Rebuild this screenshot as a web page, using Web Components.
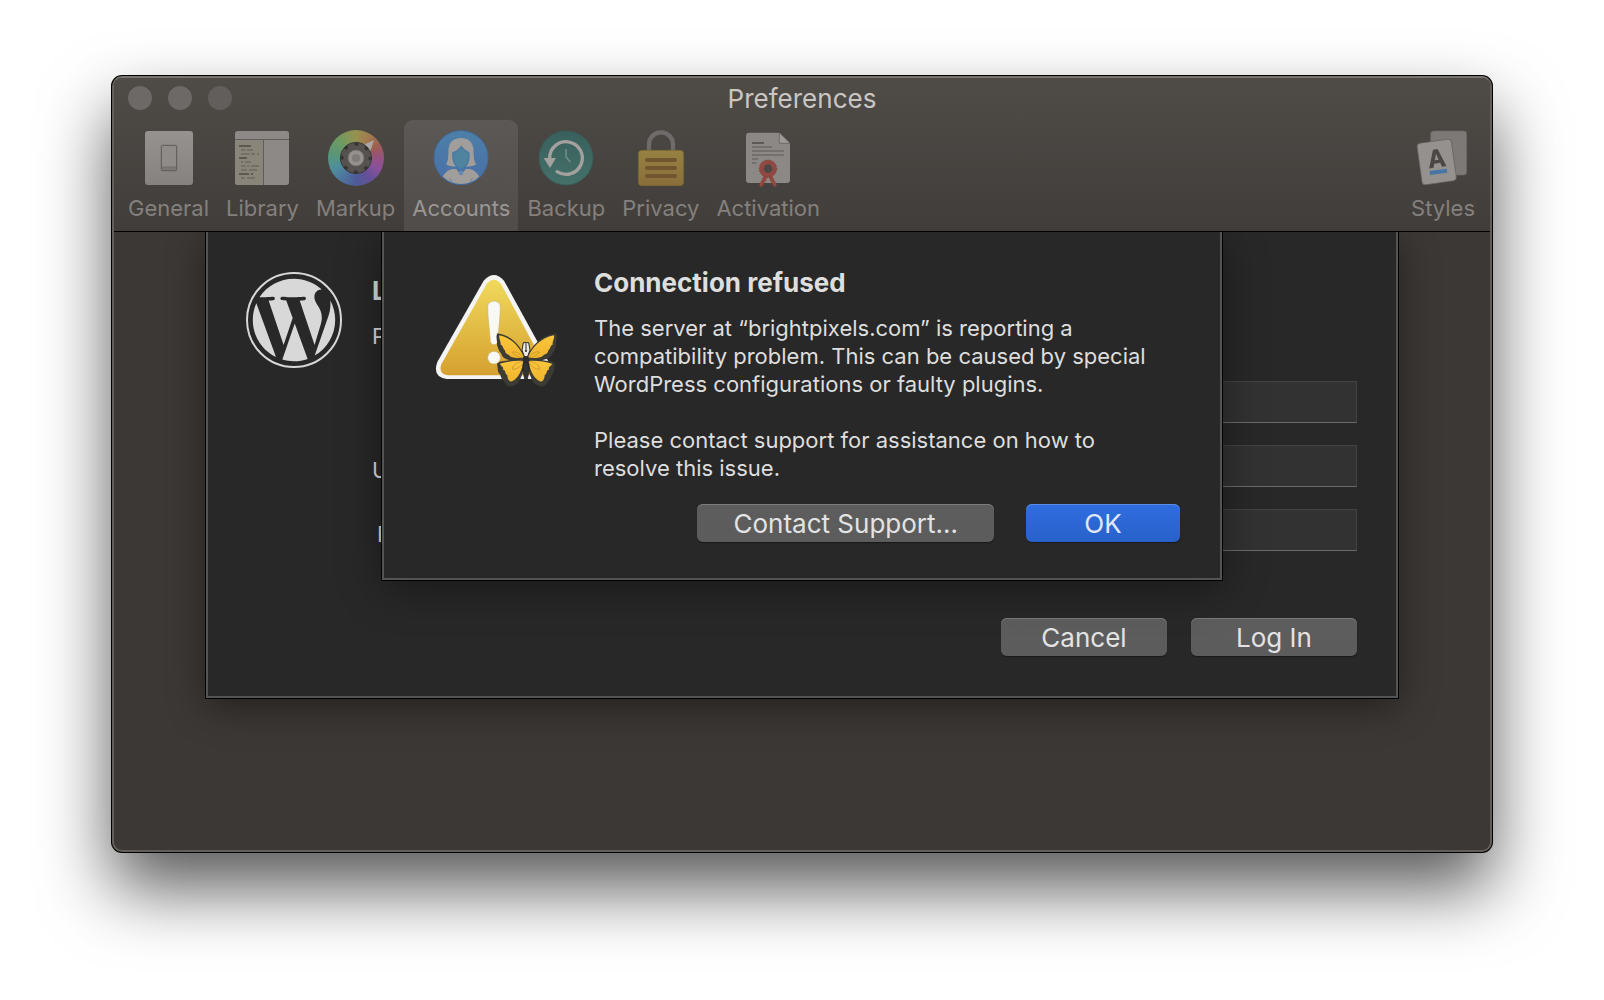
<!DOCTYPE html>
<html lang="en">
<head>
<meta charset="utf-8">
<title>Preferences</title>
<style>
  body { margin: 0; background: #fff; font-family: Inter, "Liberation Sans", sans-serif; font-size: 22px; line-height: 28px; }
</style>
</head>
<body>
<pref-window></pref-window>

<template id="t-window">
  <style>
    :host { display: block; margin: 76px 112px 146px; border: 2px solid #625f5b; border-top-color: #77746f; border-radius: 10px;
      background: #3c3835; box-shadow: 0 0 0 1px #000, 0 36px 70px rgba(0,0,0,.66); }
    main { display: grid; overflow: hidden; padding-bottom: 152px; }
    login-sheet, alert-sheet { grid-area: 1 / 1; align-self: start; }
    login-sheet { margin: 0 92px; }
    alert-sheet { margin: 0 268px; }
  </style>
  <pref-toolbar></pref-toolbar>
  <main>
    <login-sheet></login-sheet>
    <alert-sheet></alert-sheet>
  </main>
</template>

<template id="t-toolbar">
  <style>
    :host { display: block; padding: 4px 7px 0 6px; background: linear-gradient(#4f4b47, #413d3a); border-bottom: 1px solid #000; border-radius: 8px 8px 0 0; }
    header { display: grid; grid-template-columns: 1fr auto 1fr; align-items: start; padding: 0 7px 0 8px; }
    h1 { margin: 0; font-size: 26px; line-height: 34px; font-weight: 400; color: #cac6c3; }
    .lights { display: flex; gap: 16px; padding-top: 4px; }
    .lights button { width: 24px; height: 24px; padding: 0; border: 0; border-radius: 50%; background: #6d6966; }
    .lights button:last-child { background: #625e5b; }
    nav { display: flex; gap: 1px; margin-top: 4px; }
    .space { flex: 1; }
  </style>
  <header>
    <div class="lights"><button aria-label="Close"></button><button aria-label="Minimize"></button><button aria-label="Zoom"></button></div>
    <h1>Preferences</h1>
  </header>
  <nav>
    <toolbar-item label="General">
      <svg viewBox="117 204 180 180" width="60" height="60">
        <defs><linearGradient id="g" x2="0" y2="1"><stop stop-color="#959290"/><stop offset="1" stop-color="#86827f"/></linearGradient></defs>
        <rect x="135" y="213" width="144" height="162" rx="9" fill="url(#g)"/>
        <rect x="184" y="256" width="46" height="76" rx="3" fill="#8e8b89" stroke="#5c5957" stroke-width="3"/>
        <path d="M186 321h42v9h-42z" fill="#7b7876"/><path d="M186 321h42" stroke="#666361" stroke-width="2"/>
      </svg>
    </toolbar-item>
    <toolbar-item label="Library">
      <svg viewBox="399 204 180 180" width="60" height="60">
        <rect x="408" y="213" width="162" height="162" rx="8" fill="#8c8986"/>
        <path d="M408 239h85v136h-77a8 8 0 0 1-8-8z" fill="#89857a"/>
        <path d="M408 238.500h162M493.500 239v136" stroke="#5f5c59" stroke-width="3"/>
        <g stroke="#5d594f" stroke-width="6"><path d="M420 258h36M420 294h24M420 342h30M456 342h6"/></g>
        <g stroke="#737066" stroke-width="6"><path d="M426 270h13M444 270h18M426 282h25M456 282h12M474 282h6M426 306h7M438 306h18M426 318h13M444 318h7M456 318h24M426 330h18M450 330h24M426 354h12M444 354h24"/></g>
      </svg>
    </toolbar-item>
    <toolbar-item label="Markup">
      <svg viewBox="678 204 180 180" width="60" height="60">
        <foreignObject x="684" y="210" width="168" height="168"><div style="width:168px;height:168px;border-radius:50%;background:conic-gradient(#96914f,#a17c4f 30deg,#9c5f50 60deg,#955280 90deg,#8a519b 115deg,#665099 145deg,#4e5a98 180deg,#4e7a9e 220deg,#4f8f9c 245deg,#57967a 275deg,#6c9a63 315deg,#96914f)"></div></foreignObject>
        <path d="M822 240l-32 15 21 18z" fill="#aaa7a4"/>
        <circle cx="768" cy="294" r="47" fill="#555250" stroke="#3d3a38" stroke-width="3"/>
        <circle cx="768" cy="294" r="42" fill="none" stroke="#353331" stroke-width="9" stroke-dasharray="11 22" stroke-dashoffset="5.500"/>
        <circle cx="768" cy="294" r="24" fill="#94918f" stroke="#6c6967" stroke-width="2"/>
        <circle cx="768" cy="294" r="12" fill="#7e7b79"/>
      </svg>
    </toolbar-item>
    <toolbar-item label="Accounts" selected>
      <svg viewBox="93 54 180 180" width="60" height="60">
        <defs><linearGradient id="a" x2="0" y2="1"><stop stop-color="#4c80a8"/><stop offset="1" stop-color="#4a6ea8"/></linearGradient>
        <clipPath id="ac"><circle cx="183" cy="143" r="79"/></clipPath></defs>
        <circle cx="183" cy="143" r="81" fill="url(#a)" stroke="#3f6c9e" stroke-width="3"/>
        <g clip-path="url(#ac)" fill="#a09d9b">
          <path d="M138 163c9-12 6-32 8-48 3-21 17-31 37-31s34 10 37 31c2 16-1 36 9 48-10 7-27 8-36 5h-20c-9 3-26 2-35-5z"/>
          <path d="M119 230c6-32 17-47 37-53h13l14 16 14-16h13c20 6 31 21 37 53z"/>
          <path d="M159 128c10-2 18-9 25-18 7 9 12 14 22 18 3 20-2 34-11 42l-12 8-12-8c-10-8-14-22-12-42z" fill="#4e84a0" stroke="#4678a6" stroke-width="4"/>
          <path d="M169 178l14 15 14-15-14 5z" fill="#4d72a5"/><circle cx="183" cy="189" r="7" fill="#6589b5"/>
          <path d="M148 204c5 5 7 11 7 20M218 204c-5 5-7 11-7 20" fill="none" stroke="#67809c" stroke-width="3"/>
        </g>
      </svg>
    </toolbar-item>
    <toolbar-item label="Backup">
      <svg viewBox="405 54 180 180" width="60" height="60">
        <defs><linearGradient id="b" x2="0" y2="1"><stop stop-color="#39605c"/><stop offset="1" stop-color="#45706a"/></linearGradient></defs>
        <circle cx="495" cy="144" r="81" fill="url(#b)" stroke="#375d59" stroke-width="3"/>
        <path d="M446 144a49 49 0 1 1 22 41" fill="none" stroke="#a3a09e" stroke-width="10" stroke-linecap="round"/>
        <path d="M428 144h37l-18 30z" fill="#a3a09e"/>
        <path d="M495 119v22l12 14" fill="none" stroke="#718a86" stroke-width="5" stroke-linecap="round"/>
      </svg>
    </toolbar-item>
    <toolbar-item label="Privacy">
      <svg viewBox="87 144 180 180" width="60" height="60">
        <defs><linearGradient id="p" x2="0" y2="1"><stop stop-color="#968242"/><stop offset="1" stop-color="#8a6d3a"/></linearGradient></defs>
        <path d="M141 212v-19a36 36 0 0 1 72 0v19" fill="none" stroke="#6e6b6a" stroke-width="13"/>
        <rect x="109" y="211" width="136" height="106" rx="11" fill="url(#p)" stroke="#77652f" stroke-width="2"/>
        <path d="M135 240h84M135 264h84M135 288h84" stroke="#70552e" stroke-width="12" stroke-linecap="round"/>
      </svg>
    </toolbar-item>
    <toolbar-item label="Activation">
      <svg viewBox="411 144 180 180" width="60" height="60">
        <path d="M444 158h91l32 32v110a9 9 0 0 1-9 9H444a9 9 0 0 1-9-9V167a9 9 0 0 1 9-9z" fill="#8b8886"/>
        <path d="M535 158v32h32z" fill="#9d9a98" stroke="#5c5957" stroke-width="2"/>
        <path d="M453 189h36" stroke="#5c5957" stroke-width="6"/>
        <path d="M453 201h60M453 213h96M453 225h96M453 237h18M453 249h13" stroke="#73706e" stroke-width="6"/>
        <path d="M490 284l-15 30 4 8 6-5 16-25 16 25 6 5 4-8-15-30z" fill="#924840"/>
        <path d="M496 297l5-7 5 7v12h-10z" fill="#8b8886"/>
        <circle cx="501" cy="266" r="20" fill="none" stroke="#924840" stroke-width="12"/>
        <circle cx="501" cy="266" r="26" fill="none" stroke="#7c3b35" stroke-width="3" stroke-dasharray="4 4"/>
        <circle cx="501" cy="266" r="13" fill="#4b4745" stroke="#733832" stroke-width="2"/>
      </svg>
    </toolbar-item>
    <span class="space"></span>
    <toolbar-item label="Styles">
      <svg viewBox="100 204 180 180" width="60" height="60">
        <rect x="153" y="213" width="108" height="132" rx="9" fill="#7c7976" stroke="#696663" stroke-width="2"/>
        <g transform="rotate(-8 171 305)">
          <rect x="119" y="243" width="104" height="126" rx="10" fill="#94918f" stroke="#5f5c5a" stroke-width="2"/>
          <path d="M146 322l19-54h14l19 54h-13l-4-12h-18l-4 12zM166 300h12l-6-19z" fill="#4a4745"/>
          <path d="M146 330h52v12h-52z" fill="#4676a6"/>
        </g>
      </svg>
    </toolbar-item>
  </nav>
</template>

<template id="t-item">
  <style>
    :host { display: block; }
    button { display: flex; flex-direction: column; align-items: center; gap: 6px; padding: 8px 8px 9px; border: 0; border-radius: 9px 9px 0 0; background: none; color: #84807d; font: inherit; }
    :host([selected]) button { background: linear-gradient(#5b5855, #4f4c49); color: #9a9693; }
    ::slotted(svg) { display: block; }
  </style>
  <button><slot></slot><span></span></button>
</template>

<template id="t-button">
  <style>
    :host { display: block; }
    button { display: block; width: 100%; min-width: 166px; height: 38px; padding: 2px 36px 0; border: 0; border-radius: 6px; background: linear-gradient(#5d5d5d, #5c5c5c); color: #e3e3e3;
      box-shadow: inset 0 1px #7b7b7b, 0 1px 1px rgba(0,0,0,.4); font: inherit; font-size: 26px; line-height: 36px; }
    :host([primary]) button { min-width: 154px; background: linear-gradient(#2f6de0, #2861c9); box-shadow: inset 0 1px #5a8be6, 0 1px 1px rgba(0,0,0,.4); color: #e0e8f8; }
  </style>
  <button><slot></slot></button>
</template>

<template id="t-login">
  <style>
    :host { display: block; border: solid #545454; border-width: 0 2px 2px; box-shadow: 0 0 0 1px #000, 0 8px 36px rgba(0,0,0,.45); background: #282828; color: #dcdcdc; }
    form { display: grid; grid-template-columns: auto 1fr; column-gap: 30px; padding: 40px 39px 40px 38px; }
    h2 { margin: 2px 0 14px; font-size: 26px; line-height: 34px; }
    p { margin: 0 0 31px; }
    .fields { display: grid; grid-template-columns: auto 1fr; gap: 22px 8px; align-items: center; }
    label { padding-top: 8px; text-align: right; }
    input { box-sizing: border-box; width: 100%; height: 42px; padding: 0 8px; border: 1px solid #424242; border-bottom-color: #6c6c6c; background: #323232; color: inherit; font: inherit; }
    footer { grid-column: 1 / -1; display: flex; justify-content: end; gap: 24px; margin-top: 67px; }
  </style>
  <form>
    <svg viewBox="0 0 96 96" width="96" height="96" fill="#d8d8d8">
      <circle cx="48" cy="48" r="47" fill="none" stroke="#d8d8d8" stroke-width="2"/>
      <path transform="translate(48 48) scale(3.820) translate(-12 -12)" d="M21.469 6.825c.84 1.537 1.318 3.3 1.318 5.175 0 3.979-2.156 7.456-5.363 9.325l3.295-9.527c.615-1.54.82-2.771.82-3.864 0-.405-.026-.78-.07-1.11m-7.981.105c.647-.03 1.232-.105 1.232-.105.582-.075.514-.93-.067-.899 0 0-1.755.135-2.88.135-1.064 0-2.85-.15-2.85-.15-.585-.03-.661.855-.075.885 0 0 .54.061 1.125.09l1.68 4.605-2.37 7.08L5.354 6.9c.649-.03 1.234-.1 1.234-.1.585-.075.516-.93-.065-.896 0 0-1.746.138-2.874.138-.2 0-.438-.008-.69-.015C4.911 3.15 8.235 1.215 12 1.215c2.809 0 5.365 1.072 7.286 2.833-.046-.003-.091-.009-.141-.009-1.06 0-1.812.923-1.812 1.914 0 .89.513 1.643 1.06 2.531.411.72.89 1.643.89 2.977 0 .915-.354 1.994-.821 3.479l-1.075 3.585-3.9-11.61zM12 22.784c-1.059 0-2.081-.153-3.048-.437l3.237-9.406 3.315 9.087c.024.053.05.101.078.149-1.12.393-2.325.609-3.582.609M1.211 12c0-1.564.336-3.05.935-4.39L7.29 21.709C3.694 19.96 1.212 16.271 1.211 12"/>
    </svg>
    <div>
      <h2>Log In</h2>
      <p>Please log in</p>
      <div class="fields">
        <label for="url">URL:</label><input id="url" type="text">
        <label for="user">Username:</label><input id="user" type="text">
        <label for="pass">Password:</label><input id="pass" type="password">
      </div>
    </div>
    <footer><mac-button>Cancel</mac-button><mac-button>Log In</mac-button></footer>
  </form>
</template>

<template id="t-alert">
  <style>
    :host { display: grid; grid-template-columns: auto 1fr; column-gap: 14px; padding: 28px 40px 36px 36px; border: solid #545454; border-width: 0 2px 2px; box-shadow: 0 0 0 1px #000, 0 8px 40px rgba(0,0,0,.4); background: #282828; color: #dedede; }
    svg { display: block; }
    h2 { margin: 6px 0 14px; font-size: 26px; line-height: 34px; }
    p { margin: 0 0 28px; max-width: 570px; }
    p:last-child { margin: 0; }
    footer { grid-column: 1 / -1; display: flex; justify-content: end; gap: 32px; margin-top: 22px; }
  </style>
  <svg viewBox="0 0 480 420" width="160" height="140">
    <defs>
      <linearGradient id="y" x2="0" y2="1"><stop stop-color="#f0d95c"/><stop offset="1" stop-color="#d5a02f"/></linearGradient>
      <linearGradient id="w" x2="0" y2="1"><stop stop-color="#fbc63c"/><stop offset="1" stop-color="#f0b52c"/></linearGradient>
    </defs>
    <path d="M191 62q31-34 61 0L386 306q20 50-28 51H80q-44-6-28-51z" fill="#f4f4f2"/>
    <path d="M200 72q22-26 43 0L374 314q8 29-18 32H84q-30-3-20-33z" fill="url(#y)"/>
    <path d="M203 138c2-20 36-20 38 0 0 38-6 72-8 106-2 14-20 14-22 0-2-34-8-68-8-106z" fill="#f8f8f5" stroke="#cfb463" stroke-width="2"/>
    <circle cx="222" cy="293" r="19" fill="#f8f8f5" stroke="#cfb463" stroke-width="2"/>
    <g fill="#3d3b36">
      <path id="wing" d="M316 296c-10-32-38-70-84-76-6 10 1 24-1 36 4 8 5 18 12 24 4 14 14 18 26 20-14 4-32 2-38 12 4 12-1 22 10 32 2 14 12 18 18 30 10 10 24 4 34-4 12-16 20-44 23-74z"/>
      <path d="M320 296c10-32 40-70 88-76 6 10-1 24 1 36-4 8-5 18-12 24-4 14-18 18-30 20 14 4 32 2 38 12-4 12 1 22-10 32-2 14-12 18-18 30-10 10-24 4-34-4-12-16-20-44-23-74z"/>
    </g>
    <g fill="url(#w)">
      <path d="M312 292c-12-28-34-58-74-66-2 12 5 16 4 28 8 2 6 12 13 17 0 12 12 12 17 19 12 4 28 5 40 2z"/>
      <path d="M324 292c12-28 36-58 78-66 2 12-5 16-4 28-8 2-6 12-13 17 0 12-14 12-19 19-12 4-30 5-42 2z"/>
      <path d="M310 303c-22-2-50 2-70 8 2 8 12 8 9 18 10 0 4 13 13 16 0 12 6 22 14 19 20-8 32-38 34-61z"/>
      <path d="M326 303c22-2 50 2 70 8-2 8-12 8-9 18-10 0-4 13-13 16 0 12-6 22-14 19-20-8-32-38-34-61z"/>
    </g>
    <g fill="none" stroke="#b98c2e" stroke-width="2">
      <path d="M310 294c-20-2-34-16-32-18 14-2 26 8 32 18zM310 304c-20 2-34 12-32 24 16 0 28-12 32-24zM326 294c20-2 34-16 32-18-14-2-26 8-32 18zM326 304c20 2 34 12 32 24-16 0-28-12-32-24z"/>
    </g>
    <path d="M310 248h16l4 22-8 22h-8l-8-22z" fill="#eeeae2" stroke="#2a2a2a" stroke-width="3"/>
    <path d="M318 250v22" stroke="#2a2a2a" stroke-width="3"/><circle cx="318" cy="273" r="3" fill="#222"/>
    <ellipse cx="318" cy="299" rx="10" ry="11" fill="#2c2c2d"/>
    <path d="M309 312q9-9 18 0 2 26-6 50h-6q-8-24-6-50z" fill="#333334" stroke="#19191a" stroke-width="2"/>
  </svg>
  <div>
    <h2>Connection refused</h2>
    <p>The server at “brightpixels.com” is reporting a compatibility problem. This can be caused by special WordPress configurations or faulty plugins.</p>
    <p>Please contact support for assistance on how to resolve this issue.</p>
  </div>
  <footer><mac-button>Contact Support…</mac-button><mac-button primary>OK</mac-button></footer>
</template>

<script>
  const shadow = (host, id) => {
    const root = host.attachShadow({ mode: "open" });
    root.append(document.getElementById(id).content.cloneNode(true));
    return root;
  };
  class ToolbarItem extends HTMLElement {
    connectedCallback() {
      if (this.shadowRoot) return;
      shadow(this, "t-item").querySelector("span").textContent = this.getAttribute("label");
    }
  }
  class MacButton extends HTMLElement {
    connectedCallback() { if (!this.shadowRoot) shadow(this, "t-button"); }
  }
  class PrefToolbar extends HTMLElement {
    connectedCallback() { if (!this.shadowRoot) shadow(this, "t-toolbar"); }
  }
  class LoginSheet extends HTMLElement {
    connectedCallback() { if (!this.shadowRoot) shadow(this, "t-login"); }
  }
  class AlertSheet extends HTMLElement {
    connectedCallback() { if (!this.shadowRoot) shadow(this, "t-alert"); }
  }
  class PrefWindow extends HTMLElement {
    connectedCallback() { if (!this.shadowRoot) shadow(this, "t-window"); }
  }
  customElements.define("toolbar-item", ToolbarItem);
  customElements.define("mac-button", MacButton);
  customElements.define("pref-toolbar", PrefToolbar);
  customElements.define("login-sheet", LoginSheet);
  customElements.define("alert-sheet", AlertSheet);
  customElements.define("pref-window", PrefWindow);
</script>
</body>
</html>
